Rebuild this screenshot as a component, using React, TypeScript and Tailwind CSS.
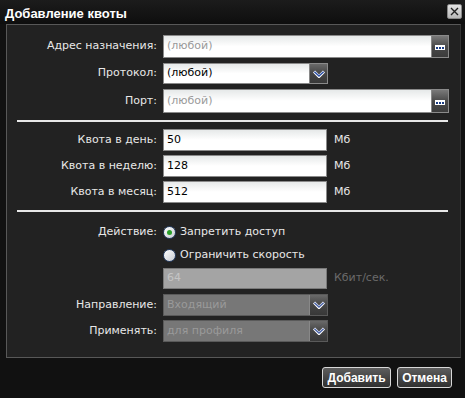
import React from "react"

const font = { fontFamily: '"DejaVu Sans", Verdana, sans-serif' }
const boldFont = { fontFamily: '"Liberation Sans", Arial, sans-serif' }

function DotsButton() {
    return (
        <div className="w-[17px] h-full flex items-end justify-center pb-[7px] border-l border-[#888] bg-gradient-to-b from-[#7a7a7a] via-[#4a4a4a] to-[#3c3c3c]">
            <div className="w-[10px] h-[5px] bg-white flex items-center justify-center gap-[1px]">
                <span className="w-[2px] h-[2px] bg-[#1d3f86]" />
                <span className="w-[2px] h-[2px] bg-[#1d3f86]" />
                <span className="w-[2px] h-[2px] bg-[#1d3f86]" />
            </div>
        </div>
    )
}

function ChevronButton({ dim }: { dim?: boolean }) {
    return (
        <div className="w-[18px] h-full flex items-center justify-center border-l border-[#888] bg-gradient-to-b from-[#6a6a6a] via-[#454545] to-[#383838]">
            <svg width="12" height="8" viewBox="0 0 12 8">
                <path d="M1 1.5 L6 6.5 L11 1.5" fill="none" stroke="#fff" strokeWidth="3" strokeLinejoin="miter" />
                <path d="M1.4 1.8 L6 6 L10.6 1.8" fill="none" stroke={dim ? "#4a63a8" : "#2b4fa6"} strokeWidth="1.5" strokeLinejoin="miter" />
            </svg>
        </div>
    )
}

function Label({ text }: { text: string }) {
    return <div className="w-[156px] pr-[6px] text-right text-[11px] text-[#e8e8e8]">{text}</div>
}

function TextBox({ value, muted, width, button }: { value: string; muted?: boolean; width: string; button?: boolean }) {
    return (
        <div className={`${width} h-full flex border border-[#8a8a8a] bg-gradient-to-b from-[#e6e9e9] via-white to-white`}>
            <div className={`flex-1 flex items-center pl-[3px] text-[11px] ${muted ? "text-[#9a9a9a]" : "text-black"}`}>{value}</div>
            {button && <DotsButton />}
        </div>
    )
}

function Separator() {
    return <div className="ml-[10px] mr-[12px] h-[2px] bg-[#e8e8e8]" />
}

export default function App() {
    return (
        <div className="w-[465px] h-[398px] bg-[#111111] flex flex-col overflow-hidden" style={font}>
            <div className="h-[24px] flex items-start justify-between pl-[5px] pr-[3px] bg-gradient-to-b from-[#1c1c1c] to-[#0e0e0e]">
                <span className="mt-[4px] text-white font-bold text-[13px]" style={boldFont}>Добавление квоты</span>
                <div className="mt-[4px] w-[15px] h-[15px] rounded-[2px] border border-[#888] bg-gradient-to-b from-[#e4e4e4] to-[#b8b8b8] flex items-center justify-center">
                    <svg width="9" height="9" viewBox="0 0 9 9">
                        <path d="M1 1 L8 8 M8 1 L1 8" stroke="#222" strokeWidth="1.4" />
                    </svg>
                </div>
            </div>

            <div className="ml-[6px] mr-[4px] h-[334px] border border-[#585858] border-r-[#333] bg-[#222222] flex flex-col pt-[10px]">
                <div className="h-[23px] flex items-center">
                    <Label text="Адрес назначения:" />
                    <TextBox value="(любой)" muted width="w-[286px]" button />
                </div>
                <div className="h-[21px] mt-[5px] flex items-center">
                    <Label text="Протокол:" />
                    <div className="w-[165px] h-full flex border border-[#8a8a8a] bg-gradient-to-b from-[#e6e9e9] via-white to-white">
                        <div className="flex-1 flex items-center pl-[3px] text-[11px] text-black">(любой)</div>
                        <ChevronButton />
                    </div>
                </div>
                <div className="h-[24px] mt-[5px] flex items-center">
                    <Label text="Порт:" />
                    <TextBox value="(любой)" muted width="w-[286px]" button />
                </div>

                <div className="mt-[7px]" />
                <Separator />

                <div className="h-[22px] mt-[7px] flex items-center">
                    <Label text="Квота в день:" />
                    <TextBox value="50" width="w-[164px]" />
                    <span className="ml-[7px] text-[11px] text-[#e8e8e8]">Мб</span>
                </div>
                <div className="h-[22px] mt-[4px] flex items-center">
                    <Label text="Квота в неделю:" />
                    <TextBox value="128" width="w-[164px]" />
                    <span className="ml-[7px] text-[11px] text-[#e8e8e8]">Мб</span>
                </div>
                <div className="h-[22px] mt-[4px] flex items-center">
                    <Label text="Квота в месяц:" />
                    <TextBox value="512" width="w-[164px]" />
                    <span className="ml-[7px] text-[11px] text-[#e8e8e8]">Мб</span>
                </div>

                <div className="mt-[7px]" />
                <Separator />

                <div className="h-[20px] mt-[10px] flex items-center">
                    <Label text="Действие:" />
                    <div className="w-[13px] h-[13px] rounded-full border border-[#2c4266] bg-gradient-to-br from-white to-[#c8ccd2] flex items-center justify-center">
                        <span className="w-[5px] h-[5px] rounded-full bg-[#2aa02a]" />
                    </div>
                    <span className="ml-[4px] text-[11px] text-[#e8e8e8]">Запретить доступ</span>
                </div>
                <div className="h-[20px] mt-[3px] flex items-center">
                    <div className="w-[156px]" />
                    <div className="w-[13px] h-[13px] rounded-full border border-[#2c4266] bg-gradient-to-br from-white to-[#c8ccd2]" />
                    <span className="ml-[4px] text-[11px] text-[#e8e8e8]">Ограничить скорость</span>
                </div>
                <div className="h-[21px] mt-[3px] flex items-center">
                    <div className="w-[156px]" />
                    <div className="w-[164px] h-full flex items-center pl-[3px] border border-[#7a7a7a] bg-[#a4a4a4] text-[11px] text-[#c4c4c4]">64</div>
                    <span className="ml-[7px] text-[11px] text-[#6a6a6a]">Кбит/сек.</span>
                </div>
                <div className="h-[22px] mt-[5px] flex items-center">
                    <Label text="Направление:" />
                    <div className="w-[165px] h-full flex border border-[#5a5a5a] bg-[#777777]">
                        <div className="flex-1 flex items-center pl-[3px] text-[11px] text-[#9a9a9a]">Входящий</div>
                        <ChevronButton dim />
                    </div>
                </div>
                <div className="h-[22px] mt-[4px] flex items-center">
                    <Label text="Применять:" />
                    <div className="w-[165px] h-full flex border border-[#5a5a5a] bg-[#777777]">
                        <div className="flex-1 flex items-center pl-[3px] text-[11px] text-[#9a9a9a]">для профиля</div>
                        <ChevronButton dim />
                    </div>
                </div>
            </div>

            <div className="flex justify-end gap-[6px] pr-[13px] mt-[9px]">
                <button className="w-[69px] h-[21px] rounded-[3px] border border-[#d8d8d8] bg-gradient-to-b from-[#5e5e5e] to-[#303030] text-white font-bold text-[12px]" style={boldFont}>Добавить</button>
                <button className="w-[55px] h-[21px] rounded-[3px] border border-[#d8d8d8] bg-gradient-to-b from-[#5e5e5e] to-[#303030] text-white font-bold text-[12px]" style={boldFont}>Отмена</button>
            </div>
        </div>
    )
}
